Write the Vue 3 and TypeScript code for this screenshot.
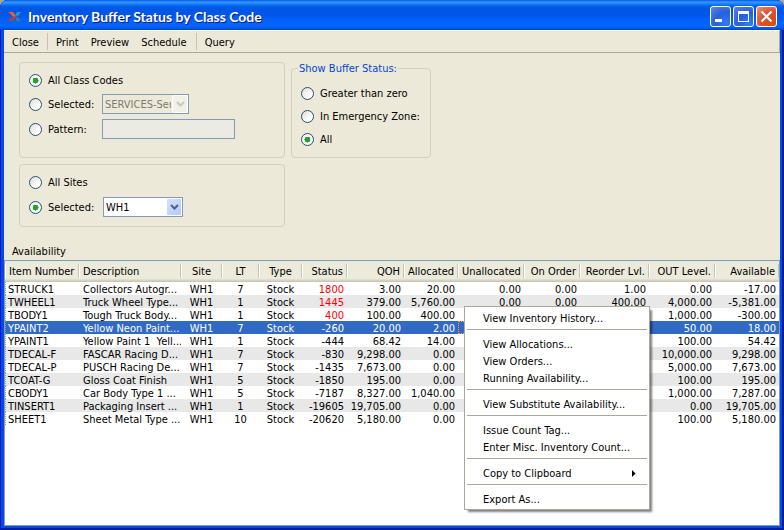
<script setup lang="ts">
import { ref } from 'vue'

interface Row {
  item: string
  description: string
  site: string
  lt: string
  type: string
  status: string
  qoh: string
  allocated: string
  unallocated?: string
  onOrder?: string
  reorder?: string
  outLevel: string
  available: string
}

interface MenuEntry {
  label: string
  submenu?: boolean
}

const toolbar: string[][] = [['Close'], ['Print', 'Preview', 'Schedule'], ['Query']]

const columns: string[] = [
  'Item Number', 'Description', 'Site', 'LT', 'Type', 'Status', 'QOH',
  'Allocated', 'Unallocated', 'On Order', 'Reorder Lvl.', 'OUT Level.', 'Available',
]

const rows: Row[] = [
  { item: 'STRUCK1', description: 'Collectors Autogr...', site: 'WH1', lt: '7', type: 'Stock', status: '1800', qoh: '3.00', allocated: '20.00', unallocated: '0.00', onOrder: '0.00', reorder: '1.00', outLevel: '0.00', available: '-17.00' },
  { item: 'TWHEEL1', description: 'Truck Wheel Type...', site: 'WH1', lt: '1', type: 'Stock', status: '1445', qoh: '379.00', allocated: '5,760.00', unallocated: '0.00', onOrder: '0.00', reorder: '400.00', outLevel: '4,000.00', available: '-5,381.00' },
  { item: 'TBODY1', description: 'Tough Truck Body...', site: 'WH1', lt: '1', type: 'Stock', status: '400', qoh: '100.00', allocated: '400.00', outLevel: '1,000.00', available: '-300.00' },
  { item: 'YPAINT2', description: 'Yellow Neon Paint...', site: 'WH1', lt: '7', type: 'Stock', status: '-260', qoh: '20.00', allocated: '2.00', outLevel: '50.00', available: '18.00' },
  { item: 'YPAINT1', description: 'Yellow Paint 1  Yell...', site: 'WH1', lt: '1', type: 'Stock', status: '-444', qoh: '68.42', allocated: '14.00', outLevel: '100.00', available: '54.42' },
  { item: 'TDECAL-F', description: 'FASCAR Racing D...', site: 'WH1', lt: '7', type: 'Stock', status: '-830', qoh: '9,298.00', allocated: '0.00', outLevel: '10,000.00', available: '9,298.00' },
  { item: 'TDECAL-P', description: 'PUSCH Racing De...', site: 'WH1', lt: '7', type: 'Stock', status: '-1435', qoh: '7,673.00', allocated: '0.00', outLevel: '5,000.00', available: '7,673.00' },
  { item: 'TCOAT-G', description: 'Gloss Coat Finish', site: 'WH1', lt: '5', type: 'Stock', status: '-1850', qoh: '195.00', allocated: '0.00', outLevel: '100.00', available: '195.00' },
  { item: 'CBODY1', description: 'Car Body Type 1 ...', site: 'WH1', lt: '5', type: 'Stock', status: '-7187', qoh: '8,327.00', allocated: '1,040.00', outLevel: '1,000.00', available: '7,287.00' },
  { item: 'TINSERT1', description: 'Packaging Insert ...', site: 'WH1', lt: '1', type: 'Stock', status: '-19605', qoh: '19,705.00', allocated: '0.00', outLevel: '0.00', available: '19,705.00' },
  { item: 'SHEET1', description: 'Sheet Metal Type ...', site: 'WH1', lt: '10', type: 'Stock', status: '-20620', qoh: '5,180.00', allocated: '0.00', outLevel: '100.00', available: '5,180.00' },
]

const menu: MenuEntry[][] = [
  [{ label: 'View Inventory History...' }],
  [{ label: 'View Allocations...' }, { label: 'View Orders...' }, { label: 'Running Availability...' }],
  [{ label: 'View Substitute Availability...' }],
  [{ label: 'Issue Count Tag...' }, { label: 'Enter Misc. Inventory Count...' }],
  [{ label: 'Copy to Clipboard', submenu: true }],
  [{ label: 'Export As...' }],
]

const classMode = ref('all')
const siteMode = ref('selected')
const bufferMode = ref('all')
const site = ref('WH1')
const pattern = ref('')
const selectedItem = ref('YPAINT2')
</script>

<template>
  <div class="window">
    <header class="titlebar">
      <svg class="logo" width="14" height="12" viewBox="0 0 14 12" aria-hidden="true">
        <path d="M7.500 4L9 1h4L9.500 5.500z" fill="#1f9ad8" />
        <path d="M7.500 7.500L9.500 6l3.500 4.500H9z" fill="#3f78a8" />
        <path d="M0.500 1h4.500L8.500 5.500 5.500 6z" fill="#f0602c" />
        <path d="M8.500 5.500L5 10H0L4.500 6z" fill="#b8402c" />
      </svg>
      <h1>Inventory Buffer Status by Class Code</h1>
      <div class="caption-buttons">
        <button type="button" class="caption" aria-label="Minimize">
          <svg width="19" height="19" viewBox="0 0 19 19"><path d="M4 12h7v3H4z" fill="#fff" /></svg>
        </button>
        <button type="button" class="caption" aria-label="Maximize">
          <svg width="19" height="19" viewBox="0 0 19 19"><path fill-rule="evenodd" d="M4 4h11v11H4zM5 7v7h9V7z" fill="#fff" /></svg>
        </button>
        <button type="button" class="caption close" aria-label="Close window">
          <svg width="19" height="19" viewBox="0 0 19 19"><path d="M4.500 4.500l10 10M14.500 4.500l-10 10" stroke="#fff" stroke-width="2.200" fill="none" /></svg>
        </button>
      </div>
    </header>

    <div class="client">
      <nav class="toolbar">
        <div v-for="(group, g) in toolbar" :key="g" class="tool-group">
          <button v-for="name in group" :key="name" type="button">{{ name }}</button>
        </div>
      </nav>

      <div class="options">
        <div class="stack">
          <div class="group codes">
            <div class="line">
              <input id="class-all" v-model="classMode" type="radio" name="class" value="all">
              <label for="class-all">All Class Codes</label>
            </div>
            <div class="line field">
              <input id="class-selected" v-model="classMode" type="radio" name="class" value="selected">
              <label for="class-selected">Selected:</label>
              <div class="combo code-combo">
                <select disabled aria-label="Class code">
                  <option>SERVICES-Ser</option>
                </select>
                <span class="drop">
                  <svg width="9" height="6" viewBox="0 0 9 6"><path d="M1 1l3.500 3.500L8 1" fill="none" stroke="#c9c7ba" stroke-width="2" /></svg>
                </span>
              </div>
            </div>
            <div class="line field">
              <input id="class-pattern" v-model="classMode" type="radio" name="class" value="pattern">
              <label for="class-pattern">Pattern:</label>
              <input v-model="pattern" class="text" type="text" disabled aria-label="Class code pattern">
            </div>
          </div>

          <div class="group sites">
            <div class="line">
              <input id="site-all" v-model="siteMode" type="radio" name="site" value="all">
              <label for="site-all">All Sites</label>
            </div>
            <div class="line field">
              <input id="site-selected" v-model="siteMode" type="radio" name="site" value="selected">
              <label for="site-selected">Selected:</label>
              <div class="combo site-combo">
                <select v-model="site" aria-label="Site">
                  <option>WH1</option>
                </select>
                <span class="drop">
                  <svg width="9" height="6" viewBox="0 0 9 6"><path d="M1 1l3.500 3.500L8 1" fill="none" stroke="#4d6185" stroke-width="2" /></svg>
                </span>
              </div>
            </div>
          </div>
        </div>

        <fieldset class="buffer">
          <legend>Show Buffer Status:</legend>
          <div class="line">
            <input id="buf-gt" v-model="bufferMode" type="radio" name="buffer" value="gt">
            <label for="buf-gt">Greater than zero</label>
          </div>
          <div class="line">
            <input id="buf-ez" v-model="bufferMode" type="radio" name="buffer" value="ez">
            <label for="buf-ez">In Emergency Zone:</label>
          </div>
          <div class="line">
            <input id="buf-all" v-model="bufferMode" type="radio" name="buffer" value="all">
            <label for="buf-all">All</label>
          </div>
        </fieldset>
      </div>

      <h2 id="availability">Availability</h2>

      <div class="list">
        <table aria-labelledby="availability">
          <colgroup>
            <col v-for="name in columns" :key="name">
          </colgroup>
          <thead>
            <tr>
              <th v-for="name in columns" :key="name" scope="col">{{ name }}</th>
            </tr>
          </thead>
          <tbody>
            <tr v-for="row in rows" :key="row.item" :class="{ selected: row.item === selectedItem }" @click="selectedItem = row.item">
              <td>{{ row.item }}</td>
              <td>{{ row.description }}</td>
              <td>{{ row.site }}</td>
              <td>{{ row.lt }}</td>
              <td>{{ row.type }}</td>
              <td :class="{ alert: Number(row.status) > 0 }">{{ row.status }}</td>
              <td>{{ row.qoh }}</td>
              <td>{{ row.allocated }}</td>
              <td>{{ row.unallocated }}</td>
              <td>{{ row.onOrder }}</td>
              <td>{{ row.reorder }}</td>
              <td>{{ row.outLevel }}</td>
              <td>{{ row.available }}</td>
            </tr>
          </tbody>
        </table>
      </div>
    </div>

    <div class="menu" role="menu">
      <div v-for="(section, s) in menu" :key="s" class="section" role="group">
        <button v-for="entry in section" :key="entry.label" type="button" role="menuitem">
          {{ entry.label }}
          <svg v-if="entry.submenu" width="4" height="7" viewBox="0 0 4 7"><path d="M0 0v7l3.500-3.500z" fill="#000" /></svg>
        </button>
      </div>
    </div>
  </div>
</template>

<style>
body {
  background: #aca899;
}
</style>

<style scoped>
.window {
  --face: #ece9d8;
  --edge: #7f9db9;
  --ui: "DejaVu Sans Condensed", "DejaVu Sans", sans-serif;
  position: relative;
  box-sizing: border-box;
  min-height: 100vh;
  display: flex;
  flex-direction: column;
  padding: 0 4px 4px;
  border-radius: 8px 8px 0 0;
  overflow: hidden;
  background: #0648e0;
  box-shadow: inset 1px 0 #0019cf, inset -2px 0 #001ea0, inset 0 -2px #001ea0;
  font: 11px/13px var(--ui);
  color: #000;
}

button, input, select {
  font: inherit;
  color: inherit;
  margin: 0;
}

.titlebar {
  display: flex;
  align-items: center;
  height: 30px;
  margin: 0 -4px;
  padding: 3px 7px 0 8px;
  box-sizing: border-box;
  background: linear-gradient(#0058e6 0, #3a93ff 2px, #288eff 3px, #0363ee 6px, #0055e5 9px, #0057e8 15px, #0060fa 20px, #0066ff 26px, #005be8 28px, #0042cc 30px);
}

.logo {
  flex: none;
}

h1 {
  flex: 1;
  margin: 0 0 0 6px;
  font: bold 14px/16px Lato, "Noto Sans", sans-serif;
  color: #fff;
  text-shadow: 1px 1px #0a1883;
  white-space: nowrap;
}

.caption-buttons {
  display: flex;
  gap: 2px;
}

.caption {
  width: 21px;
  height: 21px;
  padding: 0;
  border: 1px solid #fff;
  border-radius: 3px;
  background: radial-gradient(circle at 80% 85%, #2f7bf5, #2a5fdb 50%, #5c88ea 100%);
}

.caption svg {
  display: block;
}

.caption.close {
  background: radial-gradient(circle at 80% 85%, #e04a14, #d9502e 50%, #ec9278 100%);
}

.client {
  flex: 1;
  display: flex;
  flex-direction: column;
  background: var(--face);
}

.toolbar {
  display: flex;
  align-items: center;
  height: 23px;
  box-sizing: border-box;
  padding: 0 2px;
  border-top: 1px solid #fff;
  border-bottom: 1px solid #aca899;
  border-right: 1px solid #aca899;
}

.tool-group {
  display: flex;
}

.tool-group + .tool-group {
  margin-left: 3px;
  padding-left: 2px;
  border-left: 1px solid #c5c2b2;
}

.tool-group button {
  height: 17px;
  padding: 2px 6px 0;
  border: 0;
  background: none;
}

.tool-group:first-child button {
  padding-right: 5px;
}

.options {
  display: flex;
  align-items: flex-start;
  gap: 6px;
  padding: 9px 15px 0;
}

.stack {
  display: flex;
  flex-direction: column;
  gap: 6px;
  width: 266px;
}

.group, .buffer {
  box-sizing: border-box;
  border: 1px solid #d0d0bf;
  border-radius: 4px;
}

.group {
  display: flex;
  flex-direction: column;
  gap: 5px;
  padding: 9px;
}

.codes {
  padding-bottom: 18px;
}

.sites {
  gap: 6px;
}

.buffer {
  display: flex;
  flex-direction: column;
  gap: 6px;
  width: 140px;
  margin: 0;
  padding: 10px 9px 9px;
}

legend {
  margin-left: -3px;
  padding: 0 1px;
  color: #0046d5;
}

.line {
  display: flex;
  align-items: center;
  height: 17px;
}

.line.field {
  height: 20px;
}

.line label {
  padding-left: 6px;
}

.field label {
  width: 54px;
}

.sites .field label {
  width: 55px;
}

input[type="radio"] {
  appearance: none;
  box-sizing: border-box;
  width: 13px;
  height: 13px;
  border: 1px solid #21517b;
  border-radius: 50%;
  background: linear-gradient(135deg, #dcdcd7, #fff 70%);
}

input[type="radio"]:checked {
  background: radial-gradient(circle, #21a121 0 2px, #55c555 3px, #f6f6f3 3px);
}

.text {
  box-sizing: border-box;
  width: 133px;
  height: 20px;
  padding: 0 3px;
  border: 1px solid var(--edge);
  background: #ebebe4;
}

.combo {
  position: relative;
  height: 20px;
}

.code-combo {
  width: 87px;
}

.site-combo {
  width: 80px;
}

.combo select {
  appearance: none;
  box-sizing: border-box;
  width: 100%;
  height: 20px;
  padding: 0 17px 0 2px;
  border: 1px solid var(--edge);
  border-radius: 0;
  background: #fff;
}

.combo select:disabled {
  color: #7d7b6f;
  opacity: 1;
  background: var(--face);
}

.drop {
  position: absolute;
  top: 2px;
  right: 2px;
  bottom: 2px;
  width: 14px;
  display: flex;
  align-items: center;
  justify-content: center;
  border-radius: 1px;
  background: linear-gradient(135deg, #d4e0fd, #b3c9f9);
  pointer-events: none;
}

.combo select:disabled + .drop {
  background: #f2f1e8;
  box-shadow: 0 0 0 1px #fff;
}

h2 {
  margin: 0;
  padding: 18px 8px 2px;
  font: inherit;
}

.list {
  flex: 1;
  border: 1px solid var(--edge);
  background: #fff;
}

table {
  width: 100%;
  table-layout: fixed;
  border-collapse: separate;
  border-spacing: 0;
}

col:nth-child(1) { width: 74px; }
col:nth-child(2) { width: 102px; }
col:nth-child(3) { width: 41px; }
col:nth-child(4) { width: 37px; }
col:nth-child(5) { width: 43px; }
col:nth-child(6) { width: 45px; }
col:nth-child(7) { width: 57px; }
col:nth-child(8) { width: 54px; }
col:nth-child(9) { width: 66px; }
col:nth-child(10) { width: 56px; }
col:nth-child(11) { width: 69px; }
col:nth-child(12) { width: 66px; }

th, td {
  padding: 0 3px;
  font-weight: normal;
  text-align: right;
  white-space: pre;
  overflow: hidden;
}

th {
  height: 21px;
  padding: 0 4px;
  background:
    linear-gradient(#c7c5b2, #c7c5b2) right 0 top 3px / 1px 14px no-repeat,
    linear-gradient(#fff, #fff) left 0 top 3px / 1px 14px no-repeat,
    linear-gradient(#ebeadb 0 18px, #e2decd 18px 19px, #d6d2c2 19px 20px, #cbc7b8 20px);
}

td {
  padding-top: 2px;
  line-height: 11px;
}

th:nth-child(-n+2), td:nth-child(-n+2) {
  text-align: left;
}

td:nth-child(2) {
  padding-left: 4px;
}

th:nth-child(n+3):nth-child(-n+5), td:nth-child(n+3):nth-child(-n+5) {
  text-align: center;
}

tbody tr:nth-child(even) {
  background: #e8e8e8;
}

tbody td:first-child {
  background: repeating-linear-gradient(#8aa0b4 0 1px, transparent 1px 2px) left / 1px 100% no-repeat;
}

tbody tr.selected {
  background: #316ac5;
  color: #fff;
}

.selected td:nth-child(9) {
  outline: 1px dotted #ffa030;
  outline-offset: -1px;
}

.alert {
  color: #f00;
}

.menu {
  position: absolute;
  left: 464px;
  top: 306px;
  box-sizing: border-box;
  width: 186px;
  padding: 3px 2px 1px;
  border: 1px solid #aca899;
  background: #fff;
  box-shadow: 3px 3px 2px -1px rgba(0, 0, 0, 0.5);
}

.section + .section {
  margin-top: 2px;
  padding-top: 6px;
  border-top: 1px solid #aca899;
}

.menu button {
  display: flex;
  align-items: center;
  justify-content: space-between;
  width: 100%;
  height: 17px;
  padding: 0 11px 0 16px;
  border: 0;
  background: none;
  white-space: nowrap;
}
</style>
